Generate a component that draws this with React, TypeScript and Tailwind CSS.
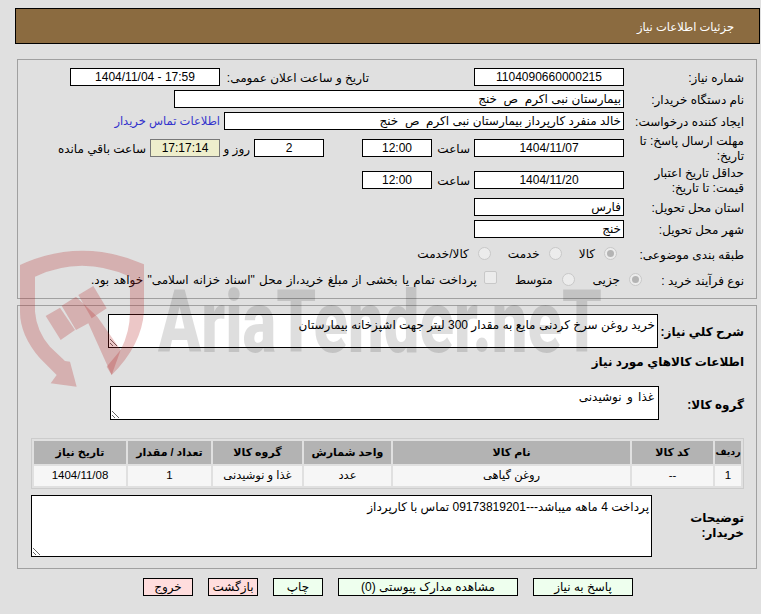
const field = "h-[18px] bg-white border border-black text-[12px] leading-[16px] outline-none px-[2px] shrink-0";

function Field({ w, value, center, bg }: { w: string; value: string; center?: boolean; bg?: string }) {
  return (
    <input
      readOnly
      dir="rtl"
      value={value}
      className={`${field} ${w} ${center ? "text-center" : "text-right"} ${bg ?? ""}`}
    />
  );
}

function Radio({ on }: { on?: boolean }) {
  return (
    <span className="w-[13px] h-[13px] mb-[2px] rounded-full bg-[#ececec] border border-[#c8c8c8] flex items-center justify-center shrink-0">
      {on ? <span className="w-[7px] h-[7px] rounded-full bg-[#b4b4b4]" /> : null}
    </span>
  );
}

function Btn({ w, pink, children }: { w: string; pink?: boolean; children: React.ReactNode }) {
  return (
    <button
      className={`h-[18px] ${w} border border-black text-[12px] leading-[16px] text-center text-black ${pink ? "bg-[#ffdddd]" : "bg-[#eeffee]"}`}
    >
      {children}
    </button>
  );
}

const cols = [
  { w: "w-[26px] text-[9.5px]", h: "ردیف", v: "1" },
  { w: "w-[81px] text-[11px]", h: "کد کالا", v: "--" },
  { w: "w-[237px] text-[11px]", h: "نام کالا", v: "روغن گیاهی" },
  { w: "w-[87px] text-[11px]", h: "واحد شمارش", v: "عدد" },
  { w: "w-[89px] text-[11px]", h: "گروه کالا", v: "غذا و نوشیدنی" },
  { w: "w-[83px] text-[11px]", h: "تعداد / مقدار", v: "1" },
  { w: "w-[92px] text-[11px]", h: "تاریخ نیاز", v: "1404/11/08" },
];

function Watermark() {
  return (
    <div dir="ltr" className="absolute inset-0 pointer-events-none overflow-hidden">
      <svg width="761" height="614" className="absolute left-0 top-0">
        <g transform="translate(10 235) scale(0.3333)" fill="rgba(180,30,30,0.25)">
          <path d="M30,90 Q215,5 402,88 L402,230 Q395,330 305,420 L290,395 L332,345 Q360,290 360,230 L360,125 Q215,60 75,125 L75,230 Q80,290 120,335 L165,378 L180,380 L200,455 L122,445 L140,420 L90,370 Q30,300 30,230 Z" />
          <path d="M107,243 L150,218 L195,285 L152,315 Z" />
          <path d="M155,212 L198,185 L262,245 L332,345 L305,420 L235,265 L198,285 Z" />
          <path d="M205,180 L250,153 L290,220 L245,250 Z" />
        </g>
      </svg>
      <div className="absolute left-[158px] top-[272px] text-[88px] leading-[100px] font-black text-[rgba(0,0,0,0.13)] whitespace-nowrap origin-left [transform:scaleX(0.72)] font-['Roboto',sans-serif]">
        AriaTender.neT
      </div>
    </div>
  );
}

export default function App() {
  return (
    <div className="relative w-[761px] h-[614px] overflow-hidden bg-[#e0e0e0] text-black text-[12px] font-['Liberation_Sans','DejaVu_Sans',sans-serif]" dir="rtl">
      <div className="pt-[8px] pr-px pl-[15px]">
        <div className="h-[36px] bg-[#8b6b40] border border-black flex items-center pt-[3px] pr-[25px] text-white text-[11.5px]">
          جزئیات اطلاعات نیاز
        </div>
      </div>

      <div className="mt-[15px] mx-[4px] ml-[17px] h-[240px] border border-[#a0a0a0] pt-[8px] pr-[12px] flex flex-col gap-1">
        <div className="flex items-center h-[18px]">
          <div className="w-[120px] shrink-0 pt-[2px]">شماره نیاز:</div>
          <Field w="w-[150px]" value="1104090660000215" center />
          <div className="w-[254px] pr-[105px] pt-[2px] shrink-0 whitespace-nowrap">تاریخ و ساعت اعلان عمومی:</div>
          <Field w="w-[150px]" value="17:59 - 1404/11/04" center />
        </div>
        <div className="flex items-center h-[18px]">
          <div className="w-[120px] shrink-0 pt-[2px]">نام دستگاه خریدار:</div>
          <Field w="w-[450px]" value="بیمارستان نبی اکرم  ص  خنج" />
        </div>
        <div className="flex items-center h-[18px]">
          <div className="w-[120px] shrink-0 pt-[2px] whitespace-nowrap">ایجاد کننده درخواست:</div>
          <Field w="w-[400px]" value="خالد منفرد کارپرداز بیمارستان نبی اکرم  ص  خنج" />
          <div className="mr-[4px] pt-[2px] text-[#3333cc] whitespace-nowrap text-[11.5px]">اطلاعات تماس خریدار</div>
        </div>
        <div className="flex items-center h-[28px]">
          <div className="w-[120px] shrink-0 pt-[2px] leading-[15px]">مهلت ارسال پاسخ: تا تاریخ:</div>
          <Field w="w-[150px]" value="1404/11/07" center />
          <div className="w-[42px] pr-[4px] pt-[2px] shrink-0">ساعت</div>
          <Field w="w-[70px]" value="12:00" center />
          <div className="w-[38px] shrink-0" />
          <Field w="w-[70px]" value="2" center />
          <div className="w-[34px] pr-[4px] pt-[2px] shrink-0 whitespace-nowrap">روز و</div>
          <Field w="w-[70px]" value="17:17:14" center bg="!bg-[#eeeecc] !border-[#777]" />
          <div className="mr-[4px] pt-[2px] whitespace-nowrap">ساعت باقي مانده</div>
        </div>
        <div className="flex items-center h-[28px]">
          <div className="w-[120px] shrink-0 pt-[2px] leading-[15px]">حداقل تاریخ اعتبار قیمت: تا تاریخ:</div>
          <Field w="w-[150px]" value="1404/11/20" center />
          <div className="w-[42px] pr-[4px] pt-[2px] shrink-0">ساعت</div>
          <Field w="w-[70px]" value="12:00" center />
        </div>
        <div className="flex items-center h-[18px]">
          <div className="w-[120px] shrink-0 pt-[2px]">استان محل تحویل:</div>
          <Field w="w-[150px]" value="فارس" />
        </div>
        <div className="flex items-center h-[18px]">
          <div className="w-[120px] shrink-0 pt-[2px]">شهر محل تحویل:</div>
          <Field w="w-[150px]" value="خنج" />
        </div>
        <div className="flex items-center h-[24px]">
          <div className="w-[127px] shrink-0 pt-[2px]">طبقه بندی موضوعی:</div>
          <div className="flex items-center gap-[9px] ml-[17px]"><Radio on /><span>کالا</span></div>
          <div className="flex items-center gap-[9px] ml-[17px]"><Radio /><span>خدمت</span></div>
          <div className="flex items-center gap-[9px]"><Radio /><span>کالا/خدمت</span></div>
        </div>
        <div className="flex items-center h-[20px]">
          <div className="w-[102px] shrink-0 pt-[2px] whitespace-nowrap">نوع فرآیند خرید :</div>
          <div className="flex items-center gap-[9px] ml-[18px]"><Radio on /><span>جزیی</span></div>
          <div className="flex items-center gap-[9px] ml-[18px]"><Radio /><span>متوسط</span></div>
          <div className="flex items-center gap-[7px] whitespace-nowrap">
            <span className="w-[13px] h-[13px] mb-[6px] rounded-[2px] bg-[#ececec] border border-[#c8c8c8] shrink-0" />
            <span className="[word-spacing:1px]">پرداخت تمام یا بخشی از مبلغ خرید،از محل "اسناد خزانه اسلامی" خواهد بود.</span>
          </div>
        </div>
      </div>

      <div className="mt-[6px] mx-[4px] ml-[17px] h-[264px] border border-[#a0a0a0] pr-[12px] relative">
        <div className="flex pt-[8px] items-center">
          <div className="w-[86px] shrink-0 pt-[2px] font-bold">شرح کلي نیاز:</div>
          <textarea readOnly dir="rtl" className="w-[550px] h-[34px] bg-white border border-black text-[12px] leading-[15px] px-[2px] pt-[3px] outline-none" value="خرید روغن سرخ کردنی مایع به مقدار 300 لیتر جهت اشپزخانه بیمارستان" />
        </div>
        <div className="font-bold mt-[6px] h-[16px] leading-[16px]">اطلاعات کالاهاي مورد نیاز</div>
        <div className="flex items-center mt-[16px]">
          <div className="w-[85px] shrink-0 pt-[4px] font-bold">گروه کالا:</div>
          <textarea readOnly dir="rtl" className="w-[549px] h-[34px] bg-white border border-black text-[12px] leading-[15px] px-[4px] pt-[3px] outline-none [word-spacing:2px]" value="غذا و نوشیدنی" />
        </div>
        <table className="mt-[18px] w-[713px] table-fixed border-separate border-spacing-[2px] border border-[#cccccc]">
          <thead>
            <tr>
              {cols.map((c) => (
                <th key={c.h} className={`${c.w} h-[23px] p-0 bg-[#b3b3b3] font-bold text-center whitespace-nowrap`}>{c.h}</th>
              ))}
            </tr>
          </thead>
          <tbody>
            <tr>
              {cols.map((c) => (
                <td key={c.h} className="h-[20px] p-0 bg-[#f6f6f6] text-[11.5px] text-center">{c.v}</td>
              ))}
            </tr>
          </tbody>
        </table>
        <div className="flex items-center mt-[6px]">
          <div className="w-[92px] shrink-0 font-bold leading-[15px]">توضیحات خریدار:</div>
          <textarea readOnly dir="rtl" className="w-[621px] h-[62px] bg-white border border-black text-[12px] leading-[15px] px-[2px] pt-[4px] outline-none" value="پرداخت 4 ماهه میباشد---09173819201 تماس با کارپرداز" />
        </div>
      </div>

      <div className="flex gap-[15px] mt-[9px] pr-[128px]">
        <Btn w="w-[100px]">پاسخ به نیاز</Btn>
        <Btn w="w-[180px]">مشاهده مدارک پیوستی (0)</Btn>
        <Btn w="w-[50px]">چاپ</Btn>
        <Btn w="w-[50px]" pink>بازگشت</Btn>
        <Btn w="w-[50px]" pink>خروج</Btn>
      </div>

      <Watermark />
    </div>
  );
}
